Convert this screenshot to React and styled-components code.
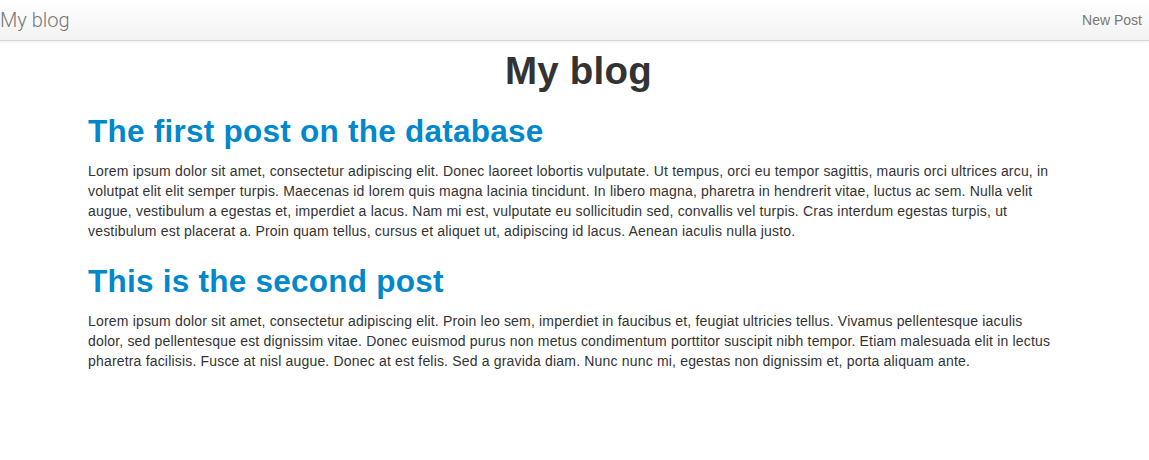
import styled, { createGlobalStyle } from "styled-components";

const GlobalStyle = createGlobalStyle`
  html, body {
    margin: 0;
    padding: 0;
    background: #fff;
  }
  body {
    font-family: "Liberation Sans", Arial, sans-serif;
    font-size: 14px;
    line-height: 20px;
    color: #333;
  }
`;

const Navbar = styled.header`
  height: 40px;
  display: flex;
  align-items: center;
  justify-content: space-between;
  background-image: linear-gradient(to bottom, #ffffff, #f2f2f2);
  border-bottom: 1px solid #d4d4d4;
  box-shadow: 0 1px 4px rgba(0, 0, 0, 0.065);
`;

const Brand = styled.a`
  display: block;
  padding: 10px 0;
  font-family: "Roboto", "Liberation Sans", sans-serif;
  font-size: 20px;
  font-weight: 300;
  line-height: 20px;
  color: #777;
  text-decoration: none;
`;

const NavLink = styled.a`
  display: block;
  padding: 10px 7px 10px 15px;
  font-size: 14px;
  line-height: 20px;
  color: #777;
  text-decoration: none;
`;

const Container = styled.main`
  padding: 0 88px;
`;

const PageTitle = styled.h1`
  margin: 10px 0;
  padding-left: 8px;
  font-size: 38.5px;
  line-height: 40px;
  font-weight: bold;
  letter-spacing: 0.2px;
  text-align: center;
  color: #333;
`;

const Post = styled.article``;

const PostTitle = styled.h2`
  margin: 20px 0 10px;
  font-size: 31.5px;
  line-height: 40px;
  font-weight: bold;
  letter-spacing: 0.25px;
  color: #0088cc;
`;

const PostBody = styled.p`
  max-width: 964px;
  margin: 0 0 10px;
  letter-spacing: 0.18px;
`;

const posts = [
  {
    title: "The first post on the database",
    body:
      "Lorem ipsum dolor sit amet, consectetur adipiscing elit. Donec laoreet lobortis vulputate. Ut tempus, orci eu tempor sagittis, mauris orci ultrices arcu, in volutpat elit elit semper turpis. Maecenas id lorem quis magna lacinia tincidunt. In libero magna, pharetra in hendrerit vitae, luctus ac sem. Nulla velit augue, vestibulum a egestas et, imperdiet a lacus. Nam mi est, vulputate eu sollicitudin sed, convallis vel turpis. Cras interdum egestas turpis, ut vestibulum est placerat a. Proin quam tellus, cursus et aliquet ut, adipiscing id lacus. Aenean iaculis nulla justo.",
  },
  {
    title: "This is the second post",
    body:
      "Lorem ipsum dolor sit amet, consectetur adipiscing elit. Proin leo sem, imperdiet in faucibus et, feugiat ultricies tellus. Vivamus pellentesque iaculis dolor, sed pellentesque est dignissim vitae. Donec euismod purus non metus condimentum porttitor suscipit nibh tempor. Etiam malesuada elit in lectus pharetra facilisis. Fusce at nisl augue. Donec at est felis. Sed a gravida diam. Nunc nunc mi, egestas non dignissim et, porta aliquam ante.",
  },
];

export default function App() {
  return (
    <>
      <GlobalStyle />
      <Navbar>
        <Brand href="#">My blog</Brand>
        <NavLink href="#">New Post</NavLink>
      </Navbar>
      <Container>
        <PageTitle>My blog</PageTitle>
        {posts.map((post) => (
          <Post key={post.title}>
            <PostTitle>{post.title}</PostTitle>
            <PostBody>{post.body}</PostBody>
          </Post>
        ))}
      </Container>
    </>
  );
}
